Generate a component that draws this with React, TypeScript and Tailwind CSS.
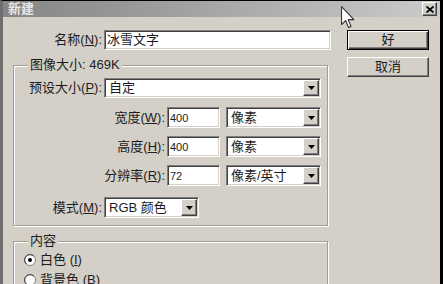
import type { ReactNode } from "react";

const sunken =
  "border border-t-[#808080] border-l-[#808080] border-b-white border-r-white shadow-[inset_1px_1px_0_#404040,inset_-1px_-1px_0_#d4d0c8]";
const raised =
  "border border-t-white border-l-white border-b-[#404040] border-r-[#404040] shadow-[inset_-1px_-1px_0_#808080]";

function DropBtn() {
  return (
    <div className={`flex h-full w-[16px] items-center justify-center bg-[#d4d0c8] ${raised}`}>
      <svg width="7" height="4" viewBox="0 0 7 4">
        <path d="M0 0H7L3.5 4Z" fill="#000" />
      </svg>
    </div>
  );
}

function Select({ value, className }: { value: string; className: string }) {
  return (
    <div className={`flex items-stretch bg-white p-[1px] ${sunken} ${className}`}>
      <span className="flex flex-1 items-center pl-[3px]">{value}</span>
      <DropBtn />
    </div>
  );
}

function Field({ value, className }: { value: string; className: string }) {
  return (
    <div className={`flex items-center bg-white px-[2px] ${sunken} ${className}`}>
      {value}
    </div>
  );
}

function Label({ text, k, className }: { text: string; k: string; className: string }) {
  return (
    <span className={`text-right ${className}`}>
      {text}(<span className="underline">{k}</span>):
    </span>
  );
}

function Group({ title, className, children }: { title: string; className: string; children: ReactNode }) {
  return (
    <div className={`flex flex-col border border-[#a09d96] shadow-[inset_1px_1px_0_#fff,1px_1px_0_#fff] ${className}`}>
      <span className="-mt-[9px] ml-[14px] self-start bg-[#d4d0c8] px-[2px]">{title}</span>
      {children}
    </div>
  );
}

function Radio({ on, text, k, className }: { on: boolean; text: string; k: string; className: string }) {
  return (
    <div className={`flex h-[16px] items-center gap-[4px] pl-[10px] ${className}`}>
      <svg width="12" height="12" viewBox="0 0 12 12">
        <circle cx="6" cy="6" r="5.5" fill="#fff" stroke="#808080" />
        <path d="M2.2 9.8A5 5 0 0 1 9.8 2.2" fill="none" stroke="#404040" />
        {on && <circle cx="6" cy="6" r="2" fill="#000" />}
      </svg>
      <span>
        {text} (<span className="underline">{k}</span>)
      </span>
    </div>
  );
}

export default function App() {
  return (
    <div className="relative flex h-[284px] w-[443px] flex-col overflow-hidden border-t border-r-[3px] border-l-[3px] border-t-black border-r-black border-l-[#6e6e6e] bg-[#d4d0c8] font-['Liberation_Sans','Noto_Sans_CJK_SC',sans-serif] text-[13px] leading-[16px] text-[#1c1c1c]">
      {/* title bar */}
      <div className="flex h-[18px] items-center justify-between bg-gradient-to-r from-[#858585] to-[#cbcbcb] pr-[3px] pl-[5px]">
        <span className="font-bold text-[#e6e6e6]">新建</span>
        <div className={`flex h-[14px] w-[15px] items-center justify-center bg-[#d4d0c8] ${raised}`}>
          <svg width="8" height="7" viewBox="0 0 8 7">
            <path d="M0.5 0.5L7.5 6.5M7.5 0.5L0.5 6.5" stroke="#000" strokeWidth="1.8" />
          </svg>
        </div>
      </div>

      <div className="flex gap-[16px] pt-[13px] pl-[10px]">
        <div className="flex w-[318px] flex-col">
          <div className="flex h-[20px] items-center gap-[2px]">
            <Label text="名称" k="N" className="w-[89px]" />
            <Field value="冰雪文字" className="h-[20px] w-[227px] text-[13px]" />
          </div>

          <Group title="图像大小: 469K" className="mt-[15px] h-[161px] w-[315px]">
            <div className="mt-[5px] flex h-[20px] items-center gap-[2px]">
              <Label text="预设大小" k="P" className="w-[88px]" />
              <Select value="自定" className="h-[20px] w-[217px]" />
            </div>
            <div className="mt-[9px] flex h-[21px] items-center gap-[2px]">
              <Label text="宽度" k="W" className="w-[151px]" />
              <Field value="400" className="h-[21px] w-[53px] text-[11px]" />
              <Select value="像素" className="ml-[4px] h-[21px] w-[95px]" />
            </div>
            <div className="mt-[8px] flex h-[21px] items-center gap-[2px]">
              <Label text="高度" k="H" className="w-[151px]" />
              <Field value="400" className="h-[21px] w-[53px] text-[11px]" />
              <Select value="像素" className="ml-[4px] h-[21px] w-[95px]" />
            </div>
            <div className="mt-[8px] flex h-[21px] items-center gap-[2px]">
              <Label text="分辨率" k="R" className="w-[151px]" />
              <Field value="72" className="h-[21px] w-[53px] text-[11px]" />
              <Select value="像素/英寸" className="ml-[4px] h-[21px] w-[95px]" />
            </div>
            <div className="mt-[11px] flex h-[21px] items-center gap-[2px]">
              <Label text="模式" k="M" className="w-[88px]" />
              <Select value="RGB 颜色" className="h-[21px] w-[95px]" />
            </div>
          </Group>

          <Group title="内容" className="mt-[15px] h-[80px] w-[315px]">
            <Radio on text="白色" k="I" className="mt-[3px]" />
            <Radio on={false} text="背景色" k="B" className="mt-[4px]" />
          </Group>
        </div>

        <div className="flex w-[82px] flex-col gap-[7px]">
          <button className="flex h-[20px] items-center justify-center border border-black bg-[#d4d0c8] shadow-[inset_1px_1px_0_#fff,inset_-1px_-1px_0_#404040,inset_-2px_-2px_0_#808080]">
            好
          </button>
          <button className={`flex h-[20px] items-center justify-center bg-[#d4d0c8] ${raised}`}>取消</button>
        </div>
      </div>

      {/* mouse pointer */}
      <svg className="absolute top-[5px] left-[338px]" width="14" height="23" viewBox="0 0 13 21">
        <path d="M0.5 0.5V17L4.3 13.3L7 19.8L9.3 18.8L6.7 12.5H12Z" fill="#fff" stroke="#333" strokeWidth="1" strokeLinejoin="round" />
      </svg>
    </div>
  );
}
